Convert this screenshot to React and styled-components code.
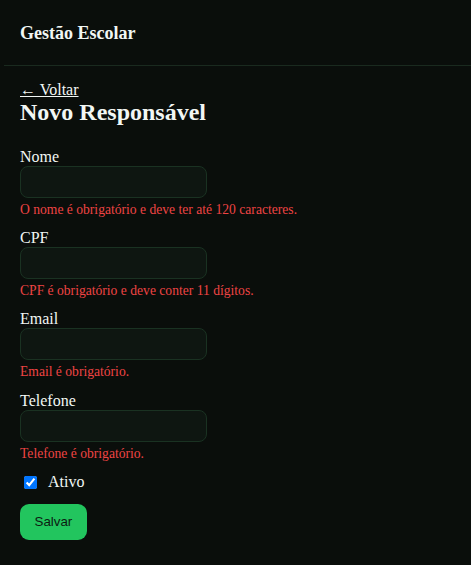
import React from "react"
import styled, { createGlobalStyle } from "styled-components"

const GlobalStyle = createGlobalStyle`
  body {
    margin: 0;
    background: #0a0e0b;
    color: #e8f1ec;
    font-family: "Liberation Serif", "Times New Roman", serif;
  }
`

const Page = styled.div`
  min-height: 565px;
  background: #0a0e0b;
`

const Header = styled.header`
  margin-left: 4px;
  height: 65px;
  padding: 0 16px;
  display: flex;
  align-items: center;
  border-bottom: 1px solid #1a2a1f;
`

const Brand = styled.div`
  font-size: 18px;
  font-weight: bold;
  color: #f2f7f4;
  padding-top: 1px;
`

const Main = styled.main`
  padding: 15px 20px 20px;
`

const BackLink = styled.a`
  display: inline-block;
  color: #f2f7f4;
  font-size: 16px;
  text-decoration: underline;
  cursor: pointer;
`

const Title = styled.h2`
  margin: 0 0 22px;
  font-size: 24px;
  font-weight: bold;
  color: #f2f7f4;
`

const Field = styled.div`
  display: flex;
  flex-direction: column;
  align-items: flex-start;
  margin-bottom: 11.2px;
`

const Label = styled.label`
  font-size: 16px;
  color: #f2f7f4;
`

const Input = styled.input`
  box-sizing: border-box;
  width: 187px;
  height: 32px;
  padding: 6px 10px;
  background: #0e1611;
  border: 1px solid #1a3222;
  border-radius: 8px;
  color: #e8f1ec;
  outline: none;
`

const Error = styled.span`
  margin-top: 4px;
  font-size: 13.6px;
  color: #ef4444;
`

const CheckRow = styled.label`
  display: flex;
  align-items: center;
  gap: 8px;
  font-size: 16px;
  color: #f2f7f4;

  input {
    margin: 3px 3px 3px 4px;
    width: 13px;
    height: 13px;
  }
`

const SaveButton = styled.button`
  margin-top: 12px;
  height: 36px;
  padding: 0 14.5px;
  background: #22c55e;
  color: #0c1a11;
  border: none;
  border-radius: 9px;
  font-family: "Liberation Sans", Arial, sans-serif;
  font-size: 13.33px;
  cursor: pointer;
`

const fields = [
  { label: "Nome", error: "O nome é obrigatório e deve ter até 120 caracteres." },
  { label: "CPF", error: "CPF é obrigatório e deve conter 11 dígitos." },
  { label: "Email", error: "Email é obrigatório." },
  { label: "Telefone", error: "Telefone é obrigatório." },
]

const App = () => (
  <Page>
    <GlobalStyle />
    <Header>
      <Brand>Gestão Escolar</Brand>
    </Header>
    <Main>
      <div>
        <BackLink>← Voltar</BackLink>
      </div>
      <Title>Novo Responsável</Title>
      {fields.map((f) => (
        <Field key={f.label}>
          <Label>{f.label}</Label>
          <Input />
          <Error>{f.error}</Error>
        </Field>
      ))}
      <CheckRow>
        <input type="checkbox" defaultChecked />
        Ativo
      </CheckRow>
      <SaveButton>Salvar</SaveButton>
    </Main>
  </Page>
)

export default App
